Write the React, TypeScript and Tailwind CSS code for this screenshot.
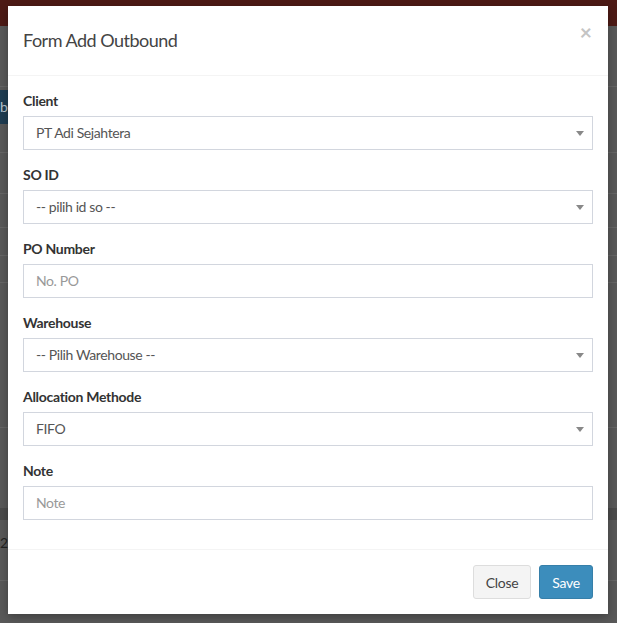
import React from "react";

function Arrow() {
  return (
    <svg width="8" height="5" viewBox="0 0 8 5" className="block">
      <path d="M0 0 H8 L4 5 Z" fill="#888888" />
    </svg>
  );
}

function Label({ children }: { children: React.ReactNode }) {
  return <label className="block h-[20px] leading-[20px] mb-[5px] text-[14px] font-bold text-[#333333] tracking-[-0.3px]">{children}</label>;
}

function SelectBox({ value }: { value: string }) {
  return (
    <div className="h-[34px] border border-[#d2d6de] flex items-center justify-between pl-[12px] pr-[8px] text-[14px] text-[#555555] tracking-[-0.4px]">
      <span className="-mt-[1px]">{value}</span>
      <Arrow />
    </div>
  );
}

function InputBox({ placeholder }: { placeholder: string }) {
  return (
    <div className="h-[34px] border border-[#d2d6de] flex items-center pl-[12px] text-[14px] text-[#999999] tracking-[-0.4px]">
      <span className="-mt-[1px]">{placeholder}</span>
    </div>
  );
}

function Group({ label, children }: { label: string; children: React.ReactNode }) {
  return (
    <div className="mb-[15px]">
      <Label>{label}</Label>
      {children}
    </div>
  );
}

export default function App() {
  return (
    <div className="relative w-[617px] h-[623px] overflow-hidden bg-[#595959] font-[family-name:Lato,sans-serif]">
      {/* underlying page (dimmed) */}
      <div className="flex flex-col">
        <div className="h-[26px] bg-[#4d1a15]" />
        <div className="h-[60px]" />
        <div className="h-px bg-[#666666]" />
        <div className="h-[3px]" />
        <div className="h-[34px] w-[40px] bg-[#1f3d52] text-[#b8c4cc] text-[14px] leading-[34px]">b</div>
        <div className="h-[28px]" />
        <div className="h-px bg-[#666666]" />
        <div className="h-[40px]" />
        <div className="h-px bg-[#666666]" />
        <div className="h-[33px]" />
        <div className="h-px bg-[#666666]" />
        <div className="h-[27px]" />
        <div className="h-px bg-[#666666]" />
        <div className="h-[26px]" />
        <div className="h-px bg-[#666666]" />
        <div className="h-[144px]" />
        <div className="h-px bg-[#666666]" />
        <div className="h-[80px]" />
        <div className="h-[12px] bg-[#4b4b4b]" />
        <div className="h-[13px]" />
        <div className="h-[20px] text-[14px] text-[#222222] leading-[20px]">2</div>
        <div className="h-[27px]" />
        <div className="h-px bg-[#666666]" />
      </div>

      {/* modal */}
      <div className="absolute inset-0 pt-[6px] pl-[8px]">
        <div className="w-[600px] bg-white shadow-[0_3px_9px_rgba(0,0,0,0.3)]">
          <div className="h-[70px] border-b border-[#f4f4f4] flex items-center justify-between pl-[15px] pr-[16px]">
            <h4 className="text-[18px] text-[#444444] leading-[26px] -mt-[1px] tracking-[-0.5px]">Form Add Outbound</h4>
            <span className="text-[21px] font-bold text-[#c4c4c4] leading-none -mt-[18px]">×</span>
          </div>
          <div className="pt-[15px] px-[15px] pb-0">
            <Group label="Client"><SelectBox value="PT Adi Sejahtera" /></Group>
            <Group label="SO ID"><SelectBox value="-- pilih id so --" /></Group>
            <Group label="PO Number"><InputBox placeholder="No. PO" /></Group>
            <Group label="Warehouse"><SelectBox value="-- Pilih Warehouse --" /></Group>
            <Group label="Allocation Methode"><SelectBox value="FIFO" /></Group>
            <Group label="Note"><InputBox placeholder="Note" /></Group>
            <div className="h-[14px]" />
          </div>
          <div className="border-t border-[#f4f4f4] p-[15px] flex justify-end gap-[8px]">
            <button className="h-[34px] w-[58px] rounded-[3px] border border-[#dddddd] bg-[#f4f4f4] text-[#444444] text-[14px] tracking-[-0.3px]">Close</button>
            <button className="h-[34px] w-[54px] rounded-[3px] border border-[#367fa9] bg-[#3c8dbc] text-white text-[14px] tracking-[-0.3px]">Save</button>
          </div>
        </div>
      </div>
    </div>
  );
}
